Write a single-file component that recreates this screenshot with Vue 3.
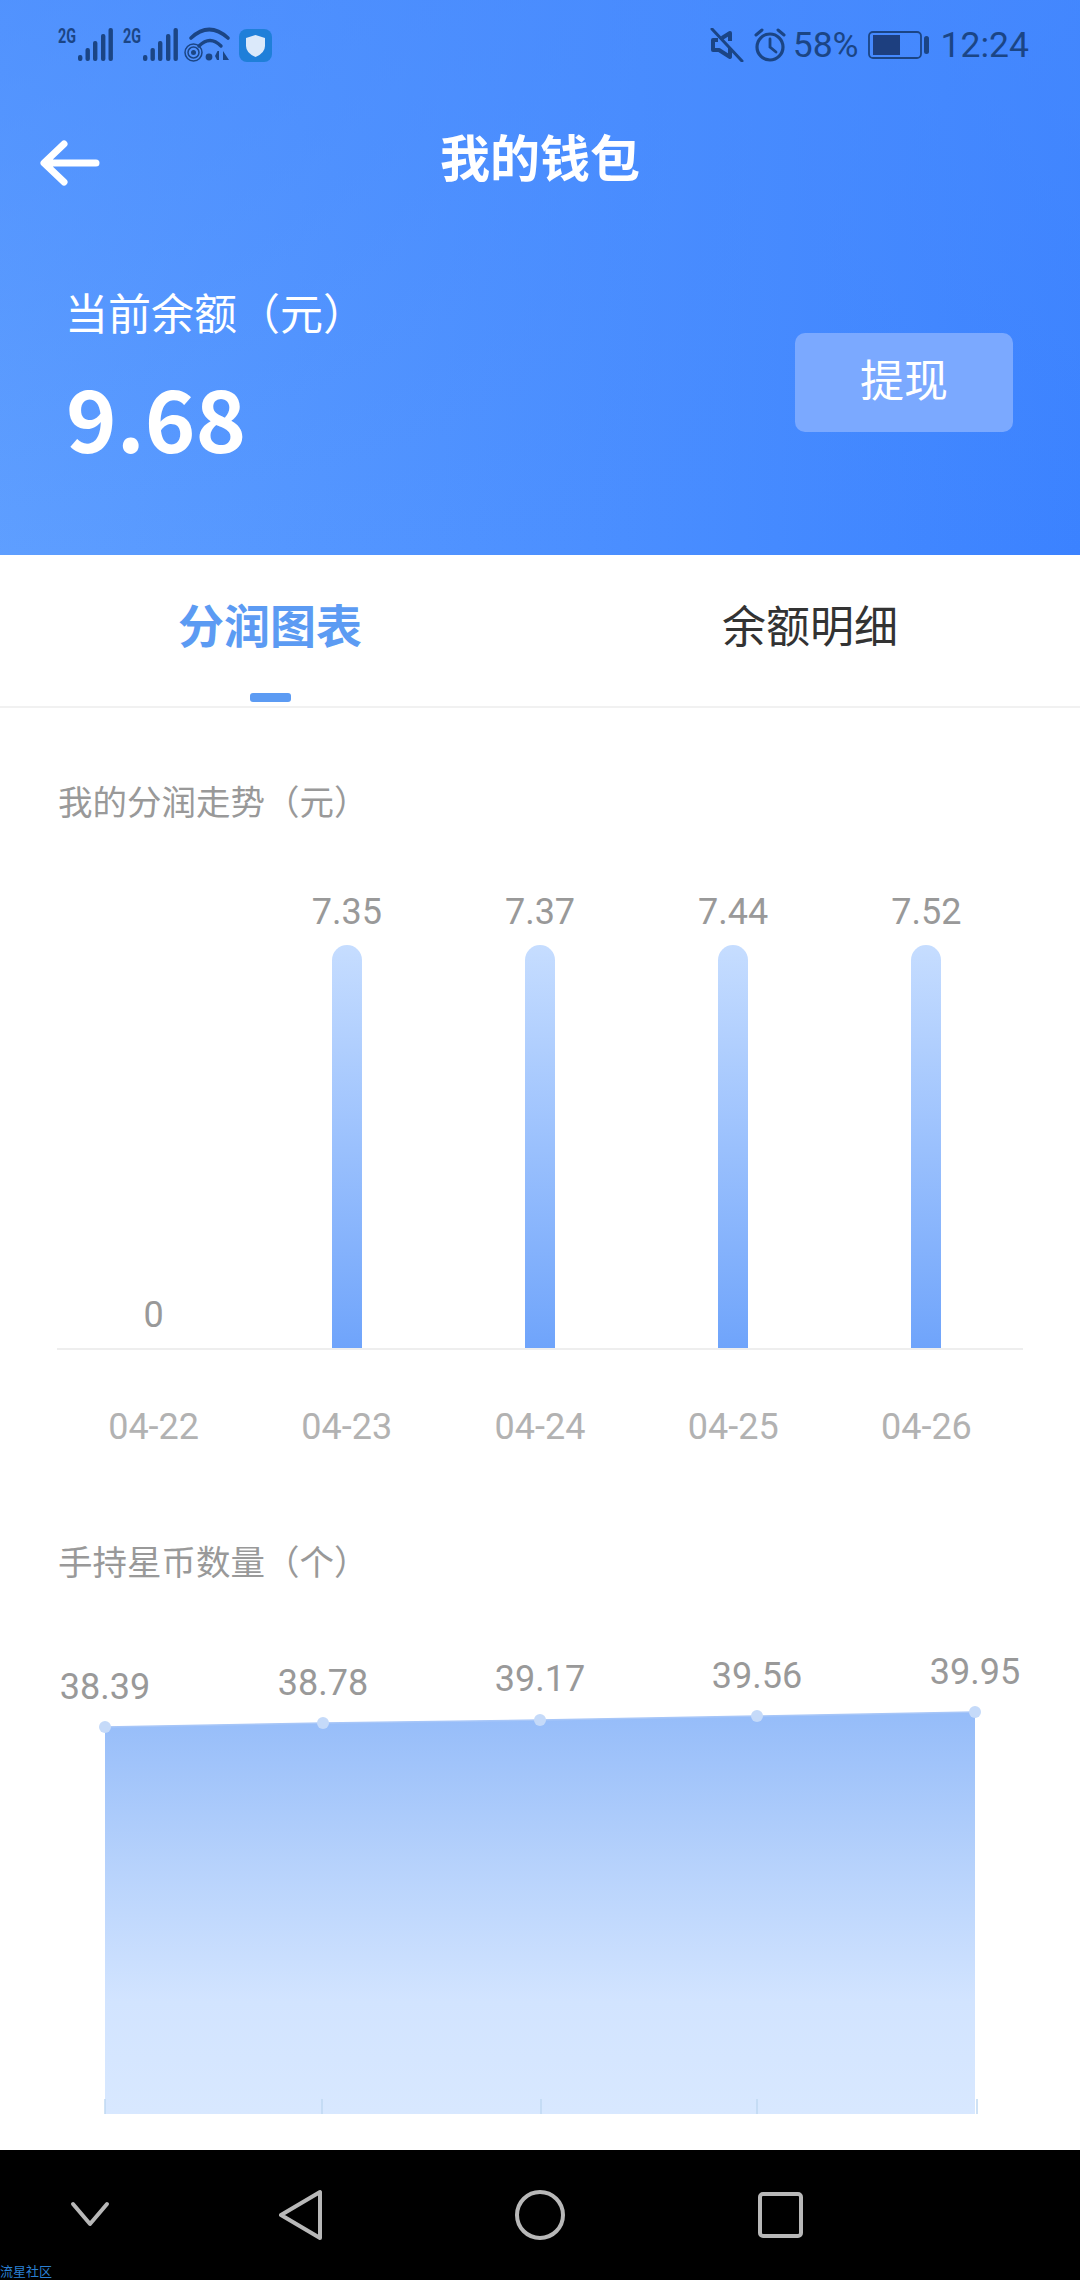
<script setup>
const barChart = [
  { date: '04-22', value: '0', height: 0 },
  { date: '04-23', value: '7.35', height: 403 },
  { date: '04-24', value: '7.37', height: 403 },
  { date: '04-25', value: '7.44', height: 403 },
  { date: '04-26', value: '7.52', height: 403 }
]

// coordinates of the free chart canvas (viewBox starts at y 1650)
const areaChart = [
  { x: 105, y: 1726, tick: 105, label: '38.39', labelY: 1698 },
  { x: 323, y: 1722, tick: 322, label: '38.78', labelY: 1694 },
  { x: 540, y: 1719, tick: 541, label: '39.17', labelY: 1690 },
  { x: 757, y: 1715, tick: 757, label: '39.56', labelY: 1687 },
  { x: 975, y: 1711, tick: 977, label: '39.95', labelY: 1683 }
]

const areaPath =
  'M' + areaChart.map(p => `${p.x} ${p.y}`).join(' L') + ' L975 2113 L105 2113 Z'
const linePoints = areaChart.map(p => `${p.x},${p.y}`).join(' ')

const signalBars = [
  { x: 20, y: 27, h: 6 },
  { x: 27.5, y: 20, h: 13 },
  { x: 35, y: 13, h: 20 },
  { x: 43, y: 6, h: 27 },
  { x: 50.5, y: 0, h: 33 }
]
</script>

<template>
  <div class="page">
    <header class="hero">
      <div class="status">
        <svg class="status-left" width="216" height="36" viewBox="57 27 216 36">
          <g v-for="offset in [0, 65]" :key="offset" :transform="`translate(${57 + offset} 28)`" fill="#1b4585">
            <text x="0" y="15" class="two-g" textLength="18" lengthAdjust="spacingAndGlyphs">2G</text>
            <rect v-for="b in signalBars" :key="b.x" :x="b.x" :y="b.y" width="4.4" :height="b.h" rx="2" />
          </g>
          <g fill="none" stroke="#1b4585" stroke-linecap="round">
            <path d="M190 38 Q208 21 227 38" stroke-width="3.6" />
            <path d="M198 46 Q209 35 220 46" stroke-width="3.4" />
            <circle cx="192.500" cy="52.500" r="2.500" fill="#1b4585" stroke="none" />
            <circle cx="192.500" cy="52.500" r="5.500" stroke-width="1.500" />
            <circle cx="192.500" cy="52.500" r="8.500" stroke-width="1.500" />
          </g>
          <circle cx="208" cy="57" r="3.400" fill="#1b4585" />
          <path d="M216 60 h2 v-9 h-1.500 l-2.500 5 z M222 51 v9 h6 z" fill="#1b4585" />
          <rect x="238" y="29" width="33" height="33" rx="8" fill="#1f7fd9" />
          <path d="M254.500 35 L264 38 V46 Q264 53 254.500 57 Q245 53 245 46 V38 Z" fill="#dbe9fa" />
        </svg>
        <div class="status-right">
          <svg width="34" height="34" viewBox="0 0 34 34">
            <path d="M8 12 H3 V22 H9 L20 29 V20 M20 13 V5 L12 10" fill="none" stroke="#1b4585" stroke-width="4" stroke-linejoin="round" />
            <path d="M2 1 L32 33" stroke="#1b4585" stroke-width="3" stroke-linecap="round" />
          </svg>
          <svg class="alarm" width="34" height="34" viewBox="0 0 34 34" fill="none" stroke="#1b4585" stroke-linecap="round">
            <circle cx="17" cy="19" r="13" stroke-width="3.200" />
            <path d="M17 11 V19 L23 24" stroke-width="2.800" />
            <path d="M3 7 L9 2 M31 7 L25 2" stroke-width="3" />
          </svg>
          <span class="percent">58%</span>
          <svg class="battery" width="62" height="28" viewBox="0 0 62 28">
            <rect x="1" y="1" width="52" height="26" rx="4" fill="none" stroke="#1b4585" stroke-width="1.800" />
            <rect x="5" y="4" width="27" height="20" fill="#1d3f7f" />
            <rect x="56" y="5" width="5" height="18" rx="2.500" fill="#1b4585" />
          </svg>
          <span class="clock">12:24</span>
        </div>
      </div>

      <div class="topbar">
        <svg class="back" width="60" height="46" viewBox="0 0 60 46" fill="none" stroke="#fff" stroke-width="7" stroke-linecap="round" stroke-linejoin="round">
          <path d="M56 23 H5 M24 4 L4 23 L24 42" />
        </svg>
        <h1 class="title">我的钱包</h1>
      </div>

      <div class="balance">
        <div>
          <div class="balance-label">当前余额（元）</div>
          <div class="balance-value">9.68</div>
        </div>
        <div class="withdraw">提现</div>
      </div>
    </header>

    <nav class="tabs">
      <div class="tab active">
        <span>分润图表</span>
        <i class="tab-line"></i>
      </div>
      <div class="tab">
        <span>余额明细</span>
      </div>
    </nav>

    <section class="profit">
      <h2 class="chart-title">我的分润走势（元）</h2>
      <div class="bars">
        <div v-for="item in barChart" :key="item.date" class="bar-col">
          <span class="bar-value">{{ item.value }}</span>
          <div class="bar" :style="{ height: item.height + 'px' }"></div>
        </div>
      </div>
      <div class="dates">
        <span v-for="item in barChart" :key="item.date">{{ item.date }}</span>
      </div>
    </section>

    <section class="coins">
      <h2 class="chart-title">手持星币数量（个）</h2>
      <svg class="area" width="1080" height="466" viewBox="0 1650 1080 466">
        <defs>
          <linearGradient id="areaFill" x1="0" y1="0" x2="0" y2="1">
            <stop offset="0" stop-color="#95bcf9" />
            <stop offset="0.4" stop-color="#b8d3fc" />
            <stop offset="0.72" stop-color="#d2e4ff" />
            <stop offset="1" stop-color="#d8e8ff" />
          </linearGradient>
        </defs>
        <path :d="areaPath" fill="url(#areaFill)" />
        <polyline :points="linePoints" fill="none" stroke="#a7c6f8" stroke-width="1.500" />
        <g v-for="p in areaChart" :key="p.label">
          <path :d="`M${p.tick} 2098 V2113`" stroke="#bfd8f2" stroke-width="1.500" />
          <circle :cx="p.x" :cy="p.y" r="6" fill="#c5daf9" />
          <text :x="p.x" :y="p.labelY" class="area-label" text-anchor="middle">{{ p.label }}</text>
        </g>
      </svg>
    </section>

    <footer class="navbar">
      <svg class="nav-chevron" width="40" height="26" viewBox="0 0 40 26" fill="none" stroke="#b8b8b8" stroke-width="4" stroke-linecap="round" stroke-linejoin="round">
        <path d="M3 3 L20 23 L37 3" />
      </svg>
      <svg class="nav-back" width="44" height="52" viewBox="0 0 44 52" fill="none" stroke="#b8b8b8" stroke-width="4" stroke-linejoin="round">
        <path d="M41 3 V49 L2 26 Z" />
      </svg>
      <svg class="nav-home" width="50" height="50" viewBox="0 0 50 50" fill="none" stroke="#b8b8b8" stroke-width="4">
        <circle cx="25" cy="25" r="23" />
      </svg>
      <svg width="45" height="46" viewBox="0 0 45 46" fill="none" stroke="#b8b8b8" stroke-width="4">
        <rect x="2" y="2" width="41" height="42" rx="3" />
      </svg>
      <span class="watermark">流星社区</span>
    </footer>
  </div>
</template>

<style scoped>
.page {
  position: relative;
  display: flex;
  flex-direction: column;
  width: 1080px;
  height: 2280px;
  overflow: hidden;
  background: #fff;
  font-family: Roboto, "Noto Sans CJK SC", sans-serif;
}

.hero {
  height: 555px;
  background:
    linear-gradient(180deg, rgba(72, 138, 253, 0.6) 0%, rgba(72, 138, 253, 0) 100%),
    linear-gradient(92deg, #5f9fff 0%, #3b82ff 100%);
}

.status {
  display: flex;
  justify-content: space-between;
  align-items: center;
  height: 90px;
  padding: 0 51px 0 58px;
  color: #1b4585;
}

.status-left {
  overflow: visible;
}

.status-right {
  display: flex;
  align-items: center;
}

.alarm {
  margin-left: 9px;
}

.two-g {
  font-family: Roboto, sans-serif;
  font-size: 21px;
  font-weight: 700;
}

.percent,
.clock {
  font-size: 35.500px;
  line-height: 40px;
}

.percent {
  margin-left: 6px;
}

.battery {
  margin-left: 9px;
}

.clock {
  margin-left: 11px;
}

.topbar {
  display: grid;
  grid-template-columns: 1fr auto 1fr;
  align-items: center;
  height: 130px;
  padding-left: 40px;
  padding-right: 40px;
}

.back {
  margin-top: 16px;
}

.title {
  margin: 0;
  font-family: "Noto Sans CJK SC", sans-serif;
  font-size: 50px;
  font-weight: 700;
  line-height: 60px;
  color: #fff;
}

.balance {
  display: flex;
  justify-content: space-between;
  align-items: flex-start;
  padding: 63px 67px 0;
}

.balance-label {
  margin-left: -2px;
  font-family: "Noto Sans CJK SC", sans-serif;
  font-size: 43px;
  font-weight: 400;
  line-height: 56px;
  color: #fff;
}

.balance-value {
  margin-top: 23px;
  margin-left: -1px;
  font-family: "Noto Sans CJK SC", sans-serif;
  font-size: 86px;
  font-weight: 700;
  line-height: 108px;
  color: #fff;
}

.withdraw {
  width: 218px;
  height: 99px;
  margin-top: 50px;
  border-radius: 10px;
  background: #7ba9ff;
  font-family: "Noto Sans CJK SC", sans-serif;
  font-size: 44px;
  font-weight: 400;
  line-height: 90px;
  text-align: center;
  color: #fff;
}

.tabs {
  display: flex;
  height: 153px;
  border-bottom: 2px solid #f1f1f1;
  box-sizing: border-box;
}

.tab {
  display: flex;
  flex: 1;
  flex-direction: column;
  align-items: center;
  padding-top: 38px;
  font-family: "Noto Sans CJK SC", sans-serif;
  font-size: 44px;
  line-height: 62px;
  color: #333;
}

.tab.active {
  padding-top: 37px;
  font-size: 46px;
  font-weight: 700;
  color: #5c9bf3;
}

.tab-line {
  width: 41px;
  height: 9px;
  margin-top: auto;
  margin-bottom: 4px;
  border-radius: 3px;
  background: #5c9bf3;
}

.chart-title {
  margin: 0;
  padding-left: 58px;
  font-family: "Noto Sans CJK SC", sans-serif;
  font-size: 34.500px;
  font-weight: 400;
  line-height: 46px;
  color: #999;
}

.profit {
  padding-top: 69px;
}

.bars {
  display: flex;
  width: 966px;
  height: 525px;
  margin-left: 57px;
  border-bottom: 2px solid #eee;
}

.bar-col {
  display: flex;
  flex: 1;
  flex-direction: column;
  justify-content: flex-end;
  align-items: center;
}

.bar-value {
  margin-bottom: 12px;
  font-size: 36px;
  line-height: 42px;
  color: #999;
}

.bar {
  width: 30px;
  border-radius: 15px 15px 0 0;
  background: linear-gradient(180deg, #c6ddff 0%, #6fa4fb 100%);
}

.dates {
  display: flex;
  width: 966px;
  margin-top: 56px;
  margin-left: 57px;
  font-size: 36px;
  line-height: 42px;
  color: #b2b2b2;
}

.dates span {
  flex: 1;
  text-align: center;
}

.coins {
  padding-top: 89px;
}

.area {
  display: block;
  margin-top: 68px;
}

.area-label {
  font-family: Roboto, sans-serif;
  font-size: 36px;
  fill: #999;
}

.navbar {
  position: relative;
  display: flex;
  align-items: center;
  height: 130px;
  margin-top: auto;
  padding-left: 70px;
  background: #000;
}

.nav-chevron {
  margin-right: 169px;
  margin-top: -2px;
}

.nav-back {
  margin-right: 192px;
}

.nav-home {
  margin-right: 193px;
}

.watermark {
  position: absolute;
  left: 0;
  bottom: 0;
  font-family: "Noto Sans CJK SC", sans-serif;
  font-size: 13px;
  line-height: 19px;
  color: #2b80d4;
}
</style>
